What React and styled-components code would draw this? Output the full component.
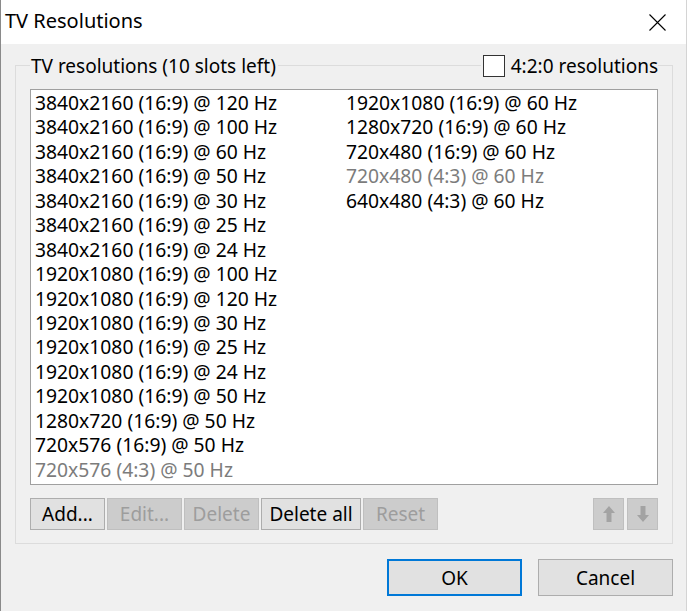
import React from "react";
import styled, { createGlobalStyle } from "styled-components";

const Global = createGlobalStyle`
  html, body { margin: 0; padding: 0; background: #f0f0f0; overflow: hidden; }
  * { box-sizing: border-box; }
`;

const FONT = `"Noto Sans", "Open Sans", sans-serif`;

const Window = styled.div`
  width: 687px;
  height: 611px;
  display: flex;
  flex-direction: column;
  font-family: ${FONT};
  color: #000;
  background: #f0f0f0;
  border-left: 1px solid #8a8a8a;
  border-right: 1px solid #d4d4d4;
`;

const TitleBar = styled.div`
  height: 44px;
  flex: none;
  background: #fff;
  display: flex;
  align-items: center;
  justify-content: space-between;
  padding: 0 20px 0 4px;
`;

const Title = styled.div`
  font-size: 20px;
  line-height: 1;
  padding-bottom: 2px;
`;

const CloseGlyph = styled.svg`
  width: 17px;
  height: 17px;
  display: block;
`;

const Body = styled.div`
  flex: 1;
  display: flex;
  flex-direction: column;
  padding: 21px 13px 0 14px;
`;

const GroupBox = styled.div`
  border: 1px solid #dcdcdc;
  height: 479px;
  display: flex;
  flex-direction: column;
  padding: 0 14px 0 14px;
`;

const GroupHeader = styled.div`
  height: 24px;
  margin-top: -12px;
  display: flex;
  align-items: center;
  justify-content: space-between;
`;

const Legend = styled.span`
  background: #f0f0f0;
  font-size: 19px;
  line-height: 24px;
  padding: 0 2px 0 1px;
`;

const CheckLabel = styled.label`
  background: #f0f0f0;
  display: flex;
  align-items: center;
  gap: 6px;
  font-size: 19px;
  line-height: 24px;
  padding-left: 2px;
`;

const CheckBox = styled.span`
  width: 22px;
  height: 22px;
  background: #fff;
  border: 1px solid #333;
`;

const ListBox = styled.div`
  margin-top: 11px;
  height: 396px;
  background: #fff;
  border: 1px solid #a0a0a0;
  padding: 1px 0 0 4px;
  display: grid;
  grid-auto-flow: column;
  grid-template-rows: repeat(16, 24.45px);
  grid-template-columns: 311px 1fr;
  align-content: start;
`;

const Item = styled.div`
  font-size: 19.3px;
  line-height: 24.45px;
  white-space: nowrap;
  color: ${(p) => (p.$dim ? "#7c7c7c" : "#000")};
`;

const ButtonRow = styled.div`
  margin-top: 13px;
  display: flex;
  align-items: center;
  gap: 2px;
`;

const Button = styled.button`
  font-family: ${FONT};
  font-size: 19px;
  height: 32px;
  width: ${(p) => p.$w || 75}px;
  padding: 0;
  margin: 0;
  background: ${(p) => (p.disabled ? "#cccccc" : "#e1e1e1")};
  border: 1px solid ${(p) => (p.disabled ? "#bfbfbf" : "#adadad")};
  color: ${(p) => (p.disabled ? "#9d9d9d" : "#000")};
  display: flex;
  align-items: center;
  justify-content: center;
`;

const Spacer = styled.div`
  flex: 1;
`;

const ArrowGroup = styled.div`
  display: flex;
  gap: 3px;
`;

const Footer = styled.div`
  display: flex;
  justify-content: flex-end;
  gap: 16px;
  margin-top: 15px;
`;

const DialogButton = styled.button`
  font-family: ${FONT};
  font-size: 19px;
  width: 135px;
  height: 37px;
  padding: 0;
  background: #e1e1e1;
  color: #000;
  border: ${(p) => (p.$default ? "2px solid #0078d7" : "1px solid #adadad")};
`;

const left = [
  "3840x2160 (16:9) @ 120 Hz",
  "3840x2160 (16:9) @ 100 Hz",
  "3840x2160 (16:9) @ 60 Hz",
  "3840x2160 (16:9) @ 50 Hz",
  "3840x2160 (16:9) @ 30 Hz",
  "3840x2160 (16:9) @ 25 Hz",
  "3840x2160 (16:9) @ 24 Hz",
  "1920x1080 (16:9) @ 100 Hz",
  "1920x1080 (16:9) @ 120 Hz",
  "1920x1080 (16:9) @ 30 Hz",
  "1920x1080 (16:9) @ 25 Hz",
  "1920x1080 (16:9) @ 24 Hz",
  "1920x1080 (16:9) @ 50 Hz",
  "1280x720 (16:9) @ 50 Hz",
  "720x576 (16:9) @ 50 Hz",
  ["720x576 (4:3) @ 50 Hz", true],
];

const right = [
  "1920x1080 (16:9) @ 60 Hz",
  "1280x720 (16:9) @ 60 Hz",
  "720x480 (16:9) @ 60 Hz",
  ["720x480 (4:3) @ 60 Hz", true],
  "640x480 (4:3) @ 60 Hz",
];

const ArrowIcon = ({ down }) => (
  <svg width="14" height="18" viewBox="0 0 14 18" style={{ transform: down ? "rotate(180deg)" : "none" }}>
    <path d="M7 1 L13 8 L9.5 8 L9.5 17 L4.5 17 L4.5 8 L1 8 Z" fill="#a3a3a3" />
  </svg>
);

function renderItem(entry, i) {
  const [text, dim] = Array.isArray(entry) ? entry : [entry, false];
  return (
    <Item key={text + i} $dim={dim}>
      {text}
    </Item>
  );
}

export default function App() {
  return (
    <>
      <Global />
      <Window>
        <TitleBar>
          <Title>TV Resolutions</Title>
          <CloseGlyph viewBox="0 0 17 17">
            <path d="M0.5 0.5 L16.5 16.5 M16.5 0.5 L0.5 16.5" stroke="#000" strokeWidth="1.1" fill="none" />
          </CloseGlyph>
        </TitleBar>
        <Body>
          <GroupBox>
            <GroupHeader>
              <Legend>TV resolutions (10 slots left)</Legend>
              <CheckLabel>
                <CheckBox />
                4:2:0 resolutions
              </CheckLabel>
            </GroupHeader>
            <ListBox>
              {left.map(renderItem)}
              {right.map(renderItem)}
            </ListBox>
            <ButtonRow>
              <Button>Add...</Button>
              <Button disabled>Edit...</Button>
              <Button disabled>Delete</Button>
              <Button $w={100}>Delete all</Button>
              <Button disabled>Reset</Button>
              <Spacer />
              <ArrowGroup>
                <Button disabled $w={31}>
                  <ArrowIcon />
                </Button>
                <Button disabled $w={31}>
                  <ArrowIcon down />
                </Button>
              </ArrowGroup>
            </ButtonRow>
          </GroupBox>
          <Footer>
            <DialogButton $default>OK</DialogButton>
            <DialogButton>Cancel</DialogButton>
          </Footer>
        </Body>
      </Window>
    </>
  );
}
